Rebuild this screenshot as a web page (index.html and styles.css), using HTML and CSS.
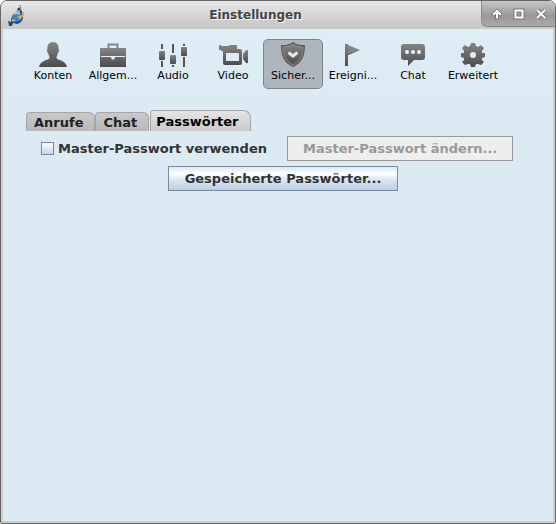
FILE: index.html
```html
<!DOCTYPE html>
<html lang="de">
  <head>
    <meta charset="UTF-8" />
    <meta name="viewport" content="width=device-width, initial-scale=1.0" />
    <title>Einstellungen</title>
    <link rel="stylesheet" href="styles.css">
  </head>
  <body>
    <div class="window">
      <header class="titlebar">
        <svg class="app-icon" width="18" height="24" viewBox="0 0 18 24">
          <path d="M9 7 Q9 4 11 3 L13 6 L15 9 V14 Q14 19 9 20 L5 19 L4 22 L1 22 L0 17 L3 18 Q3 12 6 10 Z" fill="#1d4f80" />
          <path d="M5 10 Q9 7 13 10 Q16 14 11 17 Q6 18 4 14 Z" fill="#3c86c8" />
          <path d="M6 10 Q9 8 12 10" stroke="#9ccbee" stroke-width="2" fill="none" />
          <path d="M9 7 L12 8 M10 12 L12 14 L15 11 L15 8 M4 16 L7 17" stroke="#e8a857" stroke-width="2" fill="none" />
          <path d="M12 1 L13 6" stroke="#8a7a80" stroke-width="1" />
        </svg>
        <h1>Einstellungen</h1>
        <div class="window-buttons">
          <button type="button" aria-label="Einrollen">
            <svg width="12" height="12" viewBox="0 0 12 12">
              <path d="M6 1 L11 6 L9.500 8 L7.500 6.500 V11 H4.500 V6.500 L2.500 8 L1 6 Z" fill="#fff" stroke="#777" />
            </svg>
          </button>
          <button type="button" aria-label="Maximieren">
            <svg width="12" height="12" viewBox="0 0 12 12">
              <rect x="2.5" y="2.5" width="7" height="7" fill="none" stroke="#777" stroke-width="4" />
              <rect x="2.5" y="2.5" width="7" height="7" fill="none" stroke="#fff" stroke-width="2" />
            </svg>
          </button>
          <button type="button" aria-label="Schließen">
            <svg width="12" height="12" viewBox="0 0 12 12">
              <path d="M2 2 L10 10 M10 2 L2 10" stroke="#777" stroke-width="4" />
              <path d="M2 2 L10 10 M10 2 L2 10" stroke="#fff" stroke-width="2" />
            </svg>
          </button>
        </div>
      </header>

      <main class="content">
        <svg class="defs" width="0" height="0">
          <linearGradient id="metal" x1="0" y1="0" x2="0" y2="1">
            <stop offset="0" stop-color="#858585" />
            <stop offset="1" stop-color="#4c4c4c" />
          </linearGradient>
        </svg>

        <nav class="toolbar">
          <button type="button" class="tool">
            <svg width="30" height="26" viewBox="0 0 30 26">
              <path d="M15 0 C19 0 21 3 20.500 7 C21.500 7 21 10 20 11 C19.500 13 18.500 14 18.500 16 C19 18.500 28 18 29 25 H1 C2 18 11 18.500 11.500 16 C11.500 14 10.500 13 10 11 C9 10 8.500 7 9.500 7 C9 3 11 0 15 0 Z" fill="url(#metal)" />
            </svg>
            <span>Konten</span>
          </button>
          <button type="button" class="tool">
            <svg width="30" height="26" viewBox="0 0 30 26">
              <path d="M10.500 6 V2.500 H19.500 V6" fill="none" stroke="#858585" stroke-width="2" />
              <path d="M2 6 H28 V25 H2 Z" fill="url(#metal)" />
              <path d="M3 14.500 H13 L15 16 L17 14.500 H27" fill="none" stroke="#e8eef2" stroke-width="1" />
              <path d="M13 14 H17 V16 L15 18 L13 16 Z" fill="#e8eef2" />
            </svg>
            <span>Allgem...</span>
          </button>
          <button type="button" class="tool">
            <svg width="30" height="26" viewBox="0 0 30 26">
              <path d="M3 2 H5 V7 H3 Z M3 19 H5 V25 H3 Z M14 2 H16 V11 H14 Z M14 23 H16 V25 H14 Z M25 2 H27 V4 H25 Z M25 15 H27 V25 H25 Z" fill="#555" />
              <rect x="1" y="9" width="6" height="9" rx="1" fill="url(#metal)" />
              <rect x="12" y="13" width="6" height="9" rx="1" fill="url(#metal)" />
              <rect x="23" y="5" width="6" height="9" rx="1" fill="url(#metal)" />
            </svg>
            <span>Audio</span>
          </button>
          <button type="button" class="tool">
            <svg width="30" height="26" viewBox="0 0 30 26">
              <path fill-rule="evenodd" d="M1 3 H3 V4 H11 V3 H19 V7 H22 Q24 7 24 9 V21 Q24 23 22 23 H7 Q5 23 5 21 V9 H3 V8 H1 Z M8 11 V19 H21 V11 Z" fill="url(#metal)" />
              <path d="M25 12 L28 8 H30 V21 H28 L25 17 Z" fill="url(#metal)" />
            </svg>
            <span>Video</span>
          </button>
          <button type="button" class="tool selected">
            <svg width="30" height="26" viewBox="0 0 30 26">
              <path d="M15 0 C18 2.500 22 3 27 3 C27 14 24 21 15 25 C6 21 3 14 3 3 C8 3 12 2.500 15 0 Z" fill="#5b5b5b" />
              <path d="M15 2 C18 4 21 5 25 5 C25 14 22 19 15 23 C8 19 5 14 5 5 C9 5 12 4 15 2 Z" fill="url(#metal)" stroke="#8d8d8d" />
              <path d="M10.500 10.500 L15 14 L19.500 10.500" fill="none" stroke="#e4e8ea" stroke-width="3" />
            </svg>
            <span>Sicher...</span>
          </button>
          <button type="button" class="tool">
            <svg width="30" height="26" viewBox="0 0 30 26">
              <path d="M7 2 H10 V24 H7 Z" fill="url(#metal)" />
              <path d="M10 3 L22 8 L10 13 Z" fill="#858585" />
              <path d="M10 12 L22 8 L10 13 Z" fill="#555" />
            </svg>
            <span>Ereigni...</span>
          </button>
          <button type="button" class="tool">
            <svg width="30" height="26" viewBox="0 0 30 26">
              <path d="M6 2 H24 Q27 2 27 5 V15 Q27 18 24 18 H16 L10 24 V18 H6 Q3 18 3 15 V5 Q3 2 6 2 Z" fill="url(#metal)" />
              <circle cx="9" cy="10" r="2" fill="#eef3f6" />
              <circle cx="15" cy="10" r="2" fill="#eef3f6" />
              <circle cx="21" cy="10" r="2" fill="#eef3f6" />
            </svg>
            <span>Chat</span>
          </button>
          <button type="button" class="tool">
            <svg width="30" height="26" viewBox="0 0 30 26">
              <path fill-rule="evenodd" d="M13 1 H17 L18 4 L20 5 L23 3 L26 6 L24 9 L24 11 L27 11 V15 L24 16 L24 18 L26 20 L23 23 L20 22 L18 22 L17 25 H13 L12 22 L10 22 L7 23 L4 20 L6 18 L6 16 L3 15 V11 L6 11 L6 9 L4 6 L7 3 L10 5 L12 4 Z M15 10 A3 3 0 1 0 15 16 A3 3 0 1 0 15 10 Z" fill="url(#metal)" />
            </svg>
            <span>Erweitert</span>
          </button>
        </nav>

        <div class="tabs" role="tablist">
          <button type="button" class="tab" role="tab" aria-selected="false">Anrufe</button>
          <button type="button" class="tab" role="tab" aria-selected="false">Chat</button>
          <button type="button" class="tab active" role="tab" aria-selected="true">Passwörter</button>
        </div>

        <form class="passwords">
          <div class="row">
            <label for="useMaster">
              <input type="checkbox" id="useMaster" />
              Master-Passwort verwenden
            </label>
            <button type="button" class="btn" disabled>Master-Passwort ändern...</button>
          </div>
          <button type="button" class="btn">Gespeicherte Passwörter...</button>
        </form>
      </main>
    </div>
  </body>
</html>
```

FILE: styles.css
```css
* {
  box-sizing: border-box;
}

body {
  margin: 0;
  background: #fff;
  font-family: "DejaVu Sans", sans-serif;
}

button {
  font-family: inherit;
  white-space: nowrap;
}

.window {
  display: flex;
  flex-direction: column;
  min-height: 100vh;
  border: 1px solid #666;
  border-radius: 7px 7px 2px 2px;
  background: #ccc;
  overflow: hidden;
}

/* Title bar */
.titlebar {
  display: grid;
  grid-template-columns: 74px 1fr 74px;
  height: 28px;
  background: linear-gradient(#e8e8e8, #cacaca 80%);
}

.app-icon {
  margin: 3px 0 0 7px;
}

.titlebar h1 {
  margin: 0;
  padding-right: 45px;
  font-size: 12px;
  line-height: 28px;
  text-align: center;
  color: #444;
  text-shadow: 1px 1px 0 #f4f4f4;
}

.window-buttons {
  display: flex;
  justify-content: center;
  align-items: center;
  gap: 10px;
  height: 26px;
  border: solid #888;
  border-width: 0 0 1px 1px;
  border-radius: 0 0 0 6px;
  background: linear-gradient(#c6c6c6, #989898 60%, #aaa);
}

.window-buttons button {
  width: 12px;
  height: 12px;
  padding: 0;
  border: 0;
  background: none;
}

.window-buttons svg {
  display: block;
}

/* Content */
.content {
  flex: 1;
  margin: 0 2px 2px;
  background: linear-gradient(#dfedf7, #dceaf3 70px);
}

.defs {
  display: block;
}

.toolbar {
  display: flex;
  padding: 10px 20px 0;
}

.tool {
  display: flex;
  flex-direction: column;
  align-items: center;
  width: 60px;
  height: 50px;
  padding: 2px 0 0;
  border: 1px solid transparent;
  border-radius: 5px;
  background: none;
  font-size: 11px;
  line-height: 16px;
  color: #000;
}

.tool.selected {
  border-color: #7f8487;
  background: #adb6bc;
}

.tabs {
  display: flex;
  align-items: flex-end;
  padding: 21px 23px 0;
}

.tab {
  height: 19px;
  padding: 0 11px 0 7px;
  border: 1px solid #a6a6a6;
  border-bottom: 0;
  border-radius: 4px 6px 0 0;
  background: linear-gradient(#c8c8c8, #b9b9b9);
  font-size: 13px;
  font-weight: bold;
  line-height: 20px;
  color: #222;
}

.tab.active {
  height: 21px;
  margin-left: 1px;
  padding-left: 5px;
  border-radius: 4px 8px 0 0;
  background: linear-gradient(#e4e4e4, #cacaca);
  line-height: 22px;
  color: #000;
}

.passwords {
  display: flex;
  flex-direction: column;
  align-items: center;
  gap: 5px;
  padding: 5px 28px 0 38px;
}

.row {
  display: flex;
  align-items: center;
  align-self: flex-start;
  gap: 20px;
}

label {
  display: flex;
  align-items: center;
  gap: 4px;
  font-size: 13px;
  font-weight: bold;
  white-space: nowrap;
  color: #333;
}

input[type="checkbox"] {
  appearance: none;
  width: 13px;
  height: 13px;
  margin: 0;
  border: 1px solid #7a8a99;
  background: linear-gradient(#fff, #c3d4e6);
}

.btn {
  height: 25px;
  padding: 0 16px;
  border: 1px solid #7a8a99;
  background: linear-gradient(#dde8f3, #fff 30%, #dce6f1 55%, #b8cfe5);
  font-size: 13px;
  font-weight: bold;
  color: #333;
}

.btn:disabled {
  padding: 0 15px;
  border-color: #999;
  background: #eee;
  color: #999;
}
```
